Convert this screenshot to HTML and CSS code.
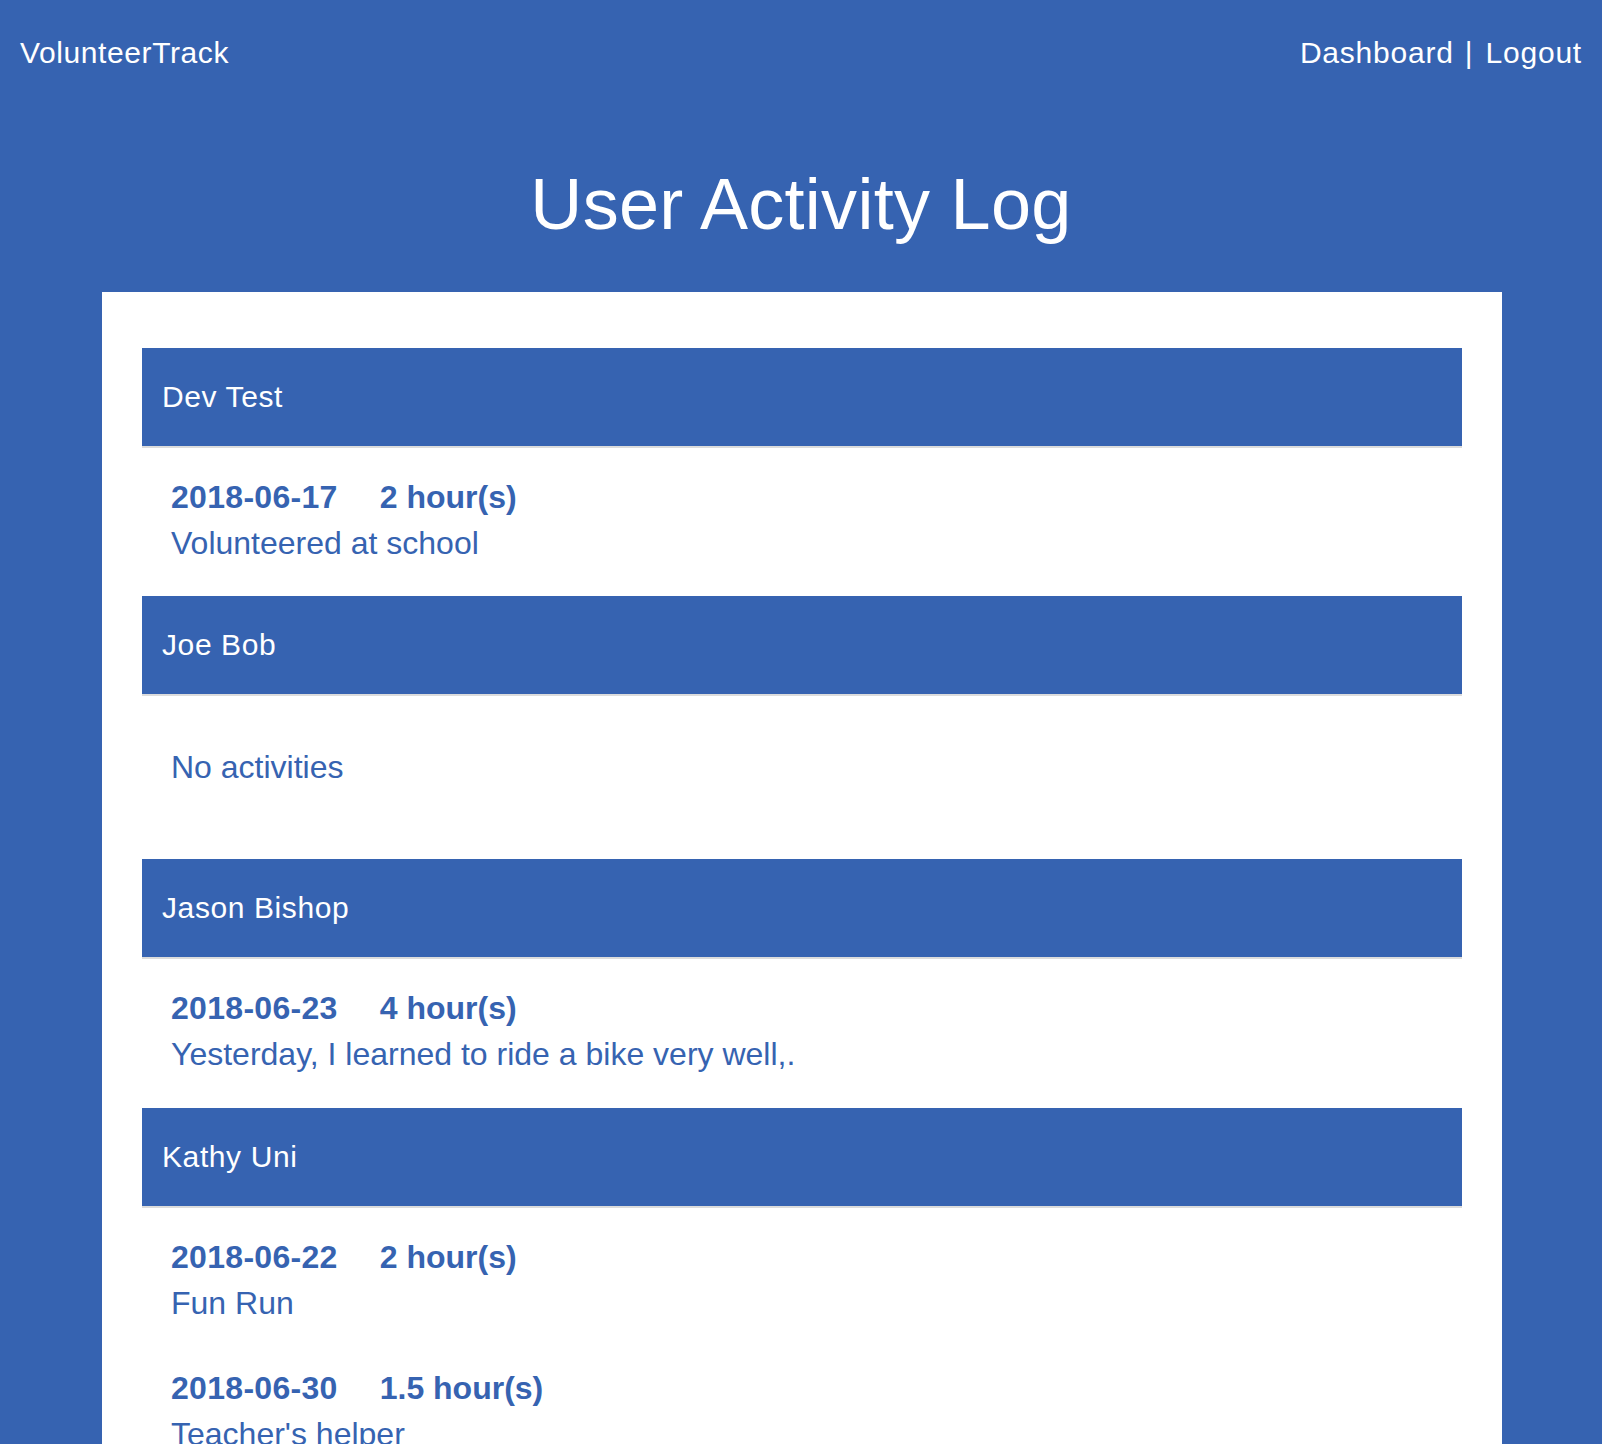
FILE: index.html
```html
<!DOCTYPE html>
<html lang="en">
<head>
<meta charset="utf-8">
<title>User Activity Log</title>
<link rel="stylesheet" href="styles.css">
</head>
<body>
<header class="topbar">
  <a class="brand" href="#">VolunteerTrack</a>
  <nav class="nav">
    <a href="#">Dashboard</a><span class="sep">|</span><a href="#">Logout</a>
  </nav>
</header>
<h1 class="page-title">User Activity Log</h1>
<main class="card">
  <section class="user">
    <h2 class="user-name">Dev Test</h2>
    <div class="activities">
      <div class="activity">
        <div class="meta"><span class="date">2018-06-17</span><span class="hours">2 hour(s)</span></div>
        <div class="desc">Volunteered at school</div>
      </div>
    </div>
  </section>
  <section class="user">
    <h2 class="user-name">Joe Bob</h2>
    <div class="activities">
      <p class="empty">No activities</p>
    </div>
  </section>
  <section class="user">
    <h2 class="user-name">Jason Bishop</h2>
    <div class="activities">
      <div class="activity">
        <div class="meta"><span class="date">2018-06-23</span><span class="hours">4 hour(s)</span></div>
        <div class="desc">Yesterday, I learned to ride a bike very well,.</div>
      </div>
    </div>
  </section>
  <section class="user">
    <h2 class="user-name">Kathy Uni</h2>
    <div class="activities">
      <div class="activity">
        <div class="meta"><span class="date">2018-06-22</span><span class="hours">2 hour(s)</span></div>
        <div class="desc">Fun Run</div>
      </div>
      <div class="activity">
        <div class="meta"><span class="date">2018-06-30</span><span class="hours">1.5 hour(s)</span></div>
        <div class="desc">Teacher's helper</div>
      </div>
    </div>
  </section>
</main>
</body>
</html>
```
FILE: styles.css
```css
html, body {
  margin: 0;
  padding: 0;
}
body {
  background: #3663b1;
  font-family: "Liberation Sans", Arial, Helvetica, sans-serif;
  color: #ffffff;
}
a {
  color: #ffffff;
  text-decoration: none;
}
.topbar {
  display: flex;
  justify-content: space-between;
  align-items: center;
  padding: 36px 20px 0 20px;
  font-size: 30px;
  line-height: 34px;
}
.brand {
  letter-spacing: 0.6px;
}
.nav {
  display: flex;
  letter-spacing: 0.8px;
}
.sep {
  margin: 0 12px 0 11px;
}
.page-title {
  margin: 93px 0 46px 0;
  font-size: 72px;
  line-height: 83px;
  font-weight: normal;
  text-align: center;
  letter-spacing: 0.3px;
}
.card {
  background: #ffffff;
  margin: 0 100px 0 102px;
  padding: 56px 40px 40px 40px;
  min-height: 1200px;
}
.user-name {
  margin: 0;
  height: 98px;
  display: flex;
  align-items: center;
  padding: 0 20px;
  background: #3663b1;
  border-bottom: 2px solid #dcdcdc;
  color: #ffffff;
  font-size: 30px;
  font-weight: normal;
  letter-spacing: 0.6px;
}
.activities {
  padding: 27px 29px 30px 29px;
  color: #3663b1;
  font-size: 32px;
  line-height: 45.7px;
}
.activity + .activity {
  margin-top: 40px;
}
.meta {
  font-weight: bold;
}
.date {
  letter-spacing: 0.3px;
}
.hours {
  margin-left: 42px;
}
.empty {
  margin: 0;
  padding: 22px 0 38.3px 0;
}
```
